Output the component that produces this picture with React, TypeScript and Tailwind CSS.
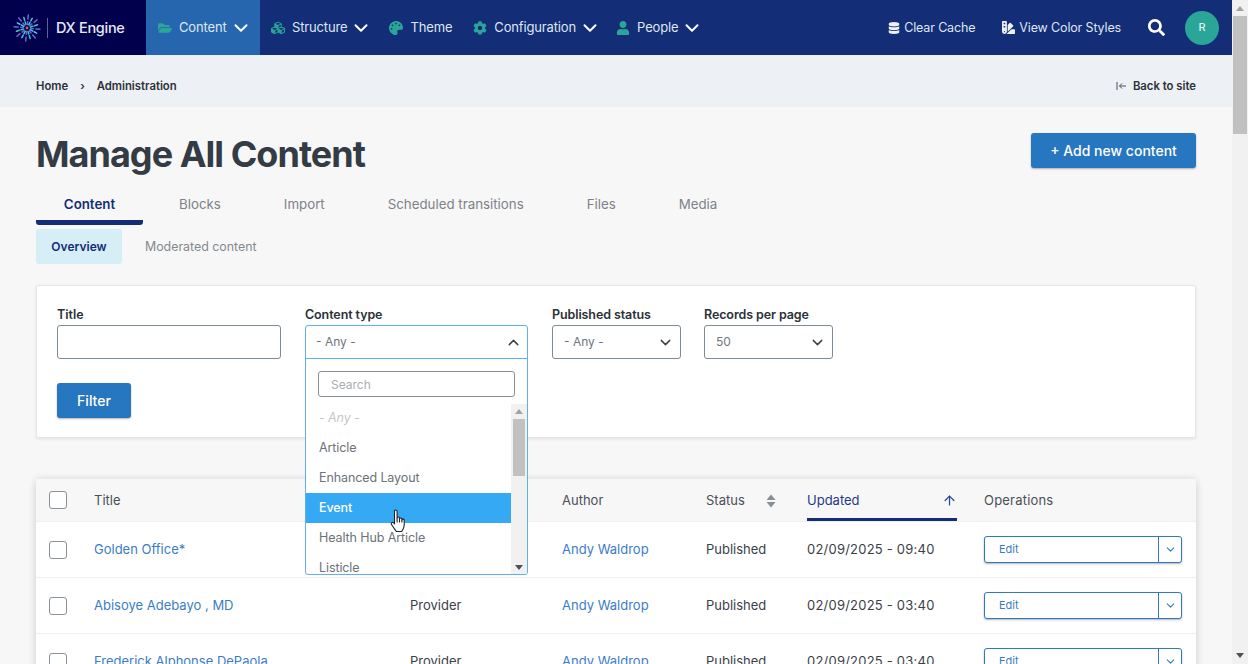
import React from "react";
import { FaFolderOpen, FaCubes, FaPalette, FaCog, FaUser, FaDatabase, FaSwatchbook, FaSearch } from "react-icons/fa";
import { ChevronDown, ChevronUp, ArrowUp } from "lucide-react";

const font = "[font-family:Inter,'Liberation_Sans',sans-serif]";

function Logo() {
  const rays = Array.from({ length: 16 }, (_, i) => i);
  const colors = ["#5a6fd8", "#46c6e0", "#7a5fd0", "#3fc7c0"];
  return (
    <svg width="28" height="28" viewBox="-14 -14 28 28">
      {rays.map((i) => {
        const a = (i / 16) * Math.PI * 2 + 0.1;
        const c = Math.cos(a);
        const s = Math.sin(a);
        return (
          <g key={i} stroke={colors[i % 4]} strokeWidth="1.5" strokeLinecap="round">
            <line x1={c * 3.6} y1={s * 3.6} x2={c * 6.4} y2={s * 6.4} />
            <line x1={c * (i % 2 ? 8 : 9)} y1={s * (i % 2 ? 8 : 9)} x2={c * (i % 2 ? 11 : 13)} y2={s * (i % 2 ? 11 : 13)} />
          </g>
        );
      })}
      <circle r="1.4" fill="#e2574c" />
    </svg>
  );
}

function NavItem({ icon, label, chevron, active, w }: { icon: React.ReactNode; label: string; chevron?: boolean; active?: boolean; w?: string }) {
  return (
    <div className={`flex items-center h-full ${active ? "bg-[#2566ae] pl-[12px] w-[114px]" : ""} ${w ?? ""}`}>
      <span className="text-[#2aa699] text-[14px] w-[14px] flex justify-center mr-[7px]">{icon}</span>
      <span className="text-[13px] text-[#dfe6f3] tracking-[-0.15px]">{label}</span>
      {chevron && <ChevronDown size={22} strokeWidth={2.2} className="text-white ml-[3px]" />}
    </div>
  );
}

function Tab({ label, active, className }: { label: string; active?: boolean; className?: string }) {
  return (
    <div className={`h-[40px] flex items-center justify-center border-b-[5px] rounded-b-[3px] text-[13.3px] pt-[5px] ${active ? "border-[#132d77] text-[#132d77] font-semibold" : "border-transparent text-[#7d8289]"} ${className ?? ""}`}>
      {label}
    </div>
  );
}

function SelectBox({ label, value, className }: { label: string; value: string; className: string }) {
  return (
    <div className={className}>
      <div className="text-[12.5px] font-semibold text-[#2b3138] h-[18px] leading-[18px] mb-[1px] tracking-[-0.1px]">{label}</div>
      <div className="h-[34px] border border-[#7d8a99] rounded-[3px] bg-white flex items-center justify-between pl-[11px] pr-[6px] text-[12px] text-[#6f757c]">
        {value}
        <ChevronDown size={17} className="text-[#3a4048]" />
      </div>
    </div>
  );
}

function Checkbox() {
  return <div className="w-[18px] h-[18px] border-[1.5px] border-[#8a929c] rounded-[3px] bg-white" />;
}

function SortIcon() {
  return (
    <svg width="10" height="14" viewBox="0 0 10 14" fill="#8a8f96">
      <path d="M5 0.5 9.5 6H.5z" />
      <path d="M5 13.5 9.5 8H.5z" />
    </svg>
  );
}

const cols = "grid grid-cols-[58px_316px_152px_144px_101px_177px_212px] items-center";

function Row({ title, type, time }: { title: string; type: string; time: string }) {
  return (
    <div className={`${cols} h-[56px] border-b border-[#eef0f3] bg-white text-[13px]`}>
      <div className="pl-[13px]"><Checkbox /></div>
      <div className="text-[#3b7cc9]">{title}</div>
      <div className="text-[#3a4048]">{type}</div>
      <div className="text-[#3b7cc9]">Andy Waldrop</div>
      <div className="text-[#3a4048]">Published</div>
      <div className="text-[#3a4048] tracking-[0.22px]">{time}</div>
      <div className="w-[198px] h-[27px] border border-[#2f78c4] rounded-[3px] flex items-stretch shadow-[0_1px_2px_rgba(0,0,0,0.3)] bg-white">
        <div className="flex-1 pl-[14px] text-[11px] text-[#3b7cc9] flex items-center">Edit</div>
        <div className="w-[23px] border-l border-[#2f78c4] flex items-center justify-center">
          <ChevronDown size={13} strokeWidth={2} className="text-[#2f78c4]" />
        </div>
      </div>
    </div>
  );
}

function Option({ label, active, muted }: { label: string; active?: boolean; muted?: boolean }) {
  return (
    <div className={`h-[30px] flex items-center pl-[13px] text-[12.5px] tracking-[-0.1px] ${active ? "bg-[#36a9f5] text-white font-medium" : muted ? "text-[#c4c7cb] italic" : "text-[#6c7279]"}`}>
      {label}
    </div>
  );
}

export default function App() {
  return (
    <div className={`${font} flex h-[664px] w-[1248px] overflow-hidden bg-[#f7f7f7]`}>
      <div className="w-[1232px] h-[664px] overflow-hidden shrink-0">
        <header className="h-[55px] bg-[#132d77] flex items-center">
          <div className="w-[146px] h-full bg-[#00004d] flex items-center pl-[13px]">
            <Logo />
            <div className="w-px h-[20px] bg-[#5d6390] ml-[6px] mr-[8px]" />
            <span className="text-[#e6e8f2] text-[14.5px] font-medium tracking-[-0.3px]">DX Engine</span>
          </div>
          <NavItem active icon={<FaFolderOpen />} label="Content" chevron />
          <NavItem icon={<FaCubes />} label="Structure" chevron w="ml-[11px]" />
          <NavItem icon={<FaPalette />} label="Theme" w="ml-[17px]" />
          <NavItem icon={<FaCog />} label="Configuration" chevron w="ml-[21px]" />
          <NavItem icon={<FaUser />} label="People" chevron w="ml-[15px]" />
          <div className="ml-auto flex items-center h-full">
            <FaDatabase className="text-[#eef1f7] text-[12px]" />
            <span className="text-[12.5px] text-[#dfe6f3] ml-[4px] tracking-[-0.15px] pt-[2px]">Clear Cache</span>
            <FaSwatchbook className="text-[#eef1f7] text-[13px] ml-[27px]" />
            <span className="text-[12.5px] text-[#dfe6f3] ml-[4px] tracking-[-0.15px] pt-[2px]">View Color Styles</span>
            <FaSearch className="text-white text-[17px] ml-[27px]" />
            <div className="w-[34px] h-[34px] rounded-full bg-[#2aa699] text-[#dff3f1] text-[11px] font-medium flex items-center justify-center ml-[20px] mr-[13px]">R</div>
          </div>
        </header>

        <div className="h-[52px] bg-[#edf0f5] flex items-center justify-between px-[36px] pt-[10px] text-[11.3px] font-semibold text-[#2b3138]">
          <div className="flex items-center">
            <span>Home</span>
            <span className="mx-[12px] text-[11px]">›</span>
            <span>Administration</span>
          </div>
          <div className="flex items-center">
            <svg width="11" height="10" viewBox="0 0 11 10" fill="none" stroke="#4a5058" strokeWidth="1" className="mr-[6px]">
              <path d="M1 1v8M10 5H3.5M6 2.5 3.5 5 6 7.5" />
            </svg>
            Back to site
          </div>
        </div>

        <div className="px-[36px]">
          <div className="flex items-start justify-between pt-[26px] h-[80px]">
            <h1 className="text-[36px] leading-[42px] font-bold text-[#333b44] tracking-[-0.97px]">Manage All Content</h1>
            <div className="h-[35px] w-[165px] bg-[#2776c0] rounded-[3px] text-white text-[14px] font-medium flex items-center justify-center shadow-[0_1px_2px_rgba(0,0,0,0.3)]">+ Add new content</div>
          </div>
          <div className="flex -mt-[2px] h-[40px] items-start">
            <Tab active label="Content" className="w-[107px]" />
            <Tab label="Blocks" className="ml-[36px]" />
            <Tab label="Import" className="ml-[63px]" />
            <Tab label="Scheduled transitions" className="ml-[63px]" />
            <Tab label="Files" className="ml-[63px]" />
            <Tab label="Media" className="ml-[63px]" />
          </div>
          <div className="flex items-center h-[35px] mt-[4px] text-[12px]">
            <div className="w-[86px] h-full bg-[#d6eff7] rounded-[3px] flex items-center justify-center font-semibold text-[#132d77] pt-[1px]">Overview</div>
            <div className="ml-[23px] text-[12.4px] text-[#85898f] pt-[2px]">Moderated content</div>
          </div>

          <div className="relative mt-[21px] h-[153px] bg-white border border-[#e4e6e9] rounded-[2px] shadow-[0_1px_3px_rgba(0,0,0,0.1)] px-[20px] pt-[20px]">
            <div className="flex">
              <div className="w-[224px]">
                <div className="text-[12.5px] font-semibold text-[#2b3138] h-[18px] leading-[18px] mb-[1px]">Title</div>
                <div className="h-[34px] border border-[#7d8a99] rounded-[3px] bg-white" />
              </div>
              <div className="w-[223px] ml-[24px]">
                <div className="text-[12.5px] font-semibold text-[#2b3138] h-[18px] leading-[18px] tracking-[-0.1px]">Content type</div>
              </div>
              <SelectBox label="Published status" value="- Any -" className="w-[129px] ml-[24px]" />
              <SelectBox label="Records per page" value="50" className="w-[129px] ml-[23px]" />
            </div>
            <div className="mt-[24px] w-[74px] h-[35px] bg-[#2776c0] rounded-[3px] text-white text-[14px] font-medium flex items-center justify-center shadow-[0_1px_2px_rgba(0,0,0,0.3)]">Filter</div>
          </div>

          <div className="mt-[41px] rounded-t-[3px] shadow-[0_1px_8px_rgba(0,0,0,0.18)]">
            <div className={`${cols} h-[43px] bg-[#f7f7f8] border-b border-[#eef0f3] text-[13px] text-[#4b5057]`}>
              <div className="pl-[13px]"><Checkbox /></div>
              <div className="pt-[2px]">Title</div>
              <div className="flex justify-end pr-[34px]"><SortIcon /></div>
              <div className="pt-[2px]">Author</div>
              <div className="flex items-center justify-between w-[70px] pt-[2px]"><span>Status</span><SortIcon /></div>
              <div className="relative h-full flex items-center w-[150px] text-[#1f3a85] border-b-[3px] border-[#132d77] pt-[5px]">
                Updated
                <ArrowUp size={15} className="absolute right-0 top-[14px] text-[#2a4a90]" />
              </div>
              <div className="tracking-[0.2px] pt-[2px]">Operations</div>
            </div>
            <Row title="Golden Office*" type="" time="02/09/2025 - 09:40" />
            <Row title="Abisoye Adebayo , MD" type="Provider" time="02/09/2025 - 03:40" />
            <Row title="Frederick Alphonse DePaola" type="Provider" time="02/09/2025 - 03:40" />
          </div>
        </div>
      </div>

      <div className="w-[16px] h-[664px] bg-[#f1f1f1] shrink-0 flex flex-col items-center">
        <svg width="8" height="5" viewBox="0 0 8 5" className="mt-[6px]"><path d="M4 0 8 5H0z" fill="#a3a3a3" /></svg>
        <div className="w-[14px] h-[118px] bg-[#c1c1c1] mt-[5px]" />
        <svg width="8" height="5" viewBox="0 0 8 5" className="mt-auto mb-[6px]"><path d="M4 5 8 0H0z" fill="#505050" /></svg>
      </div>

      {/* Open dropdown overlay */}
      <div className="absolute left-[305px] top-[325px] w-[223px] h-[250px] bg-white border border-[#5fb0f2] rounded-[3px] overflow-hidden z-10">
        <div className="h-[33px] border-b border-[#5fb0f2] flex items-center justify-between pl-[10px] pr-[5px] text-[12px] text-[#6f757c]">
          - Any -
          <ChevronUp size={17} className="text-[#3a4048]" />
        </div>
        <div className="px-[12px] pt-[12px] pb-[7px]">
          <div className="h-[26px] border border-[#8a8f96] rounded-[3px] pl-[12px] pt-[1px] flex items-center text-[12px] text-[#a9adb2]">Search</div>
        </div>
        <div className="flex h-[171px]">
          <div className="w-[205px] overflow-hidden">
            <div className="-mt-[1px]">
              <Option muted label="- Any -" />
              <Option label="Article" />
              <Option label="Enhanced Layout" />
              <Option active label="Event" />
              <Option label="Health Hub Article" />
              <Option label="Listicle" />
            </div>
          </div>
          <div className="w-[16px] bg-[#f1f1f1] flex flex-col items-center">
            <svg width="8" height="5" viewBox="0 0 8 5" className="mt-[5px]"><path d="M4 0 8 5H0z" fill="#a3a3a3" /></svg>
            <div className="w-[12px] h-[57px] bg-[#c1c1c1] mt-[5px]" />
            <svg width="8" height="5" viewBox="0 0 8 5" className="mt-auto mb-[5px]"><path d="M4 5 8 0H0z" fill="#505050" /></svg>
          </div>
        </div>
      </div>

      <svg className="absolute left-[390px] top-[509px] z-20" width="18" height="24" viewBox="0 0 18 24" fill="#fff" stroke="#222" strokeWidth="1.1" strokeLinejoin="round">
        <path d="M4.5 2.2c0-1.6 2.6-1.6 2.6 0V9c0-1.4 2.4-1.4 2.4 0v1c0-1.3 2.4-1.3 2.4 0v1c0-1.2 2.3-1.2 2.3 0v5c0 3-1.5 5-2.5 6.5H6.5C5 20.5 3 18 1.5 15.5c-1-1.6.8-3 2-1.8l1 1.2z" />
        <path d="M7.1 9v4.5M9.5 10v3.5M11.9 11v2.5" fill="none" />
      </svg>
    </div>
  );
}
